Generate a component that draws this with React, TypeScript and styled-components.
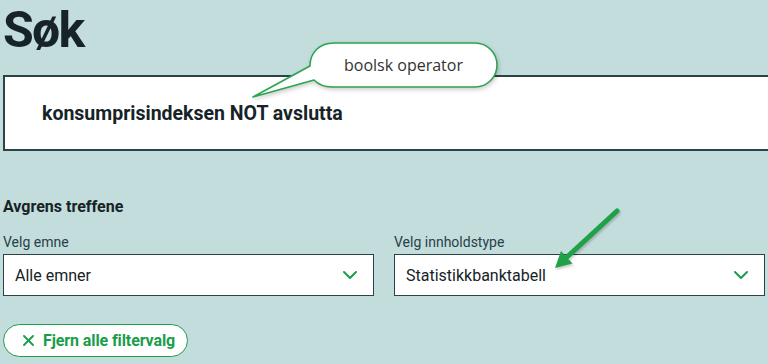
import React from "react";
import styled, { createGlobalStyle } from "styled-components";

const GlobalStyle = createGlobalStyle`
  html, body {
    margin: 0;
    padding: 0;
    background: #c3dcdc;
    font-family: Roboto, "Liberation Sans", Arial, sans-serif;
    color: #162327;
  }
`;

const Page = styled.div`
  position: relative;
  width: 768px;
  height: 364px;
  padding-left: 3px;
  box-sizing: border-box;
  overflow: hidden;
`;

const Title = styled.h1`
  margin: 0 0 15px;
  font-size: 50px;
  line-height: 60px;
  font-weight: 700;
  letter-spacing: -1.8px;
`;

const SearchBox = styled.div`
  display: flex;
  align-items: center;
  height: 76px;
  width: calc(100% + 20px);
  box-sizing: border-box;
  border: 2px solid #2b4347;
  background: #fff;
  padding-left: 37px;
  font-size: 19.5px;
  font-weight: 700;
`;

const FilterHeading = styled.h2`
  margin: 46px 0 0;
  font-size: 16px;
  line-height: 20px;
  font-weight: 700;
`;

const FilterGrid = styled.div`
  display: grid;
  grid-template-columns: 371px 371px;
  column-gap: 20px;
  margin-top: 16px;
`;

const Field = styled.div`
  display: flex;
  flex-direction: column;
  row-gap: 3px;
`;

const Label = styled.span`
  font-size: 14px;
  line-height: 18px;
  color: #274247;
`;

const Select = styled.div`
  display: flex;
  align-items: center;
  justify-content: space-between;
  height: 42px;
  box-sizing: border-box;
  border: 1px solid #2b4347;
  background: #fff;
  padding: 0 15px 0 11px;
  font-size: 16px;
`;

const ClearButton = styled.button`
  display: inline-flex;
  align-items: center;
  column-gap: 9px;
  margin-top: 28px;
  height: 33px;
  padding: 0 12px 0 19px;
  border: 1px solid #1a9d49;
  border-radius: 17px;
  background: #fff;
  color: #1a9d49;
  font-family: Roboto, "Liberation Sans", Arial, sans-serif;
  font-size: 16px;
  font-weight: 700;
  letter-spacing: -0.1px;
  cursor: pointer;
`;

const Callout = styled.div`
  position: absolute;
  left: 250px;
  top: 40px;
  width: 252px;
  height: 62px;

  svg {
    display: block;
    filter: drop-shadow(1px 2px 2px rgba(0, 0, 0, 0.2));
  }
`;

const CalloutText = styled.span`
  position: absolute;
  left: 60px;
  top: 3px;
  width: 187px;
  height: 44px;
  display: flex;
  align-items: center;
  justify-content: center;
  font-family: "Open Sans", "Liberation Sans", sans-serif;
  font-size: 16px;
  color: #333;
`;

const Arrow = styled.svg`
  position: absolute;
  left: 545px;
  top: 200px;
  filter: drop-shadow(1px 2px 1px rgba(0, 0, 0, 0.2));
`;

const Chevron = () => (
  <svg width="16" height="10" viewBox="0 0 16 10">
    <polyline
      points="2,2 8,8 14,2"
      fill="none"
      stroke="#1a9d49"
      strokeWidth="2"
      strokeLinecap="round"
      strokeLinejoin="round"
    />
  </svg>
);

const CloseIcon = () => (
  <svg width="11" height="11" viewBox="0 0 11 11">
    <path
      d="M1 1 L10 10 M10 1 L1 10"
      stroke="#1a9d49"
      strokeWidth="1.8"
      strokeLinecap="round"
    />
  </svg>
);

const App = () => {
  return (
    <Page>
      <GlobalStyle />
      <Title>Søk</Title>
      <SearchBox>konsumprisindeksen NOT avslutta</SearchBox>
      <FilterHeading>Avgrens treffene</FilterHeading>
      <FilterGrid>
        <Field>
          <Label>Velg emne</Label>
          <Select>
            Alle emner
            <Chevron />
          </Select>
        </Field>
        <Field>
          <Label>Velg innholdstype</Label>
          <Select>
            Statistikkbanktabell
            <Chevron />
          </Select>
        </Field>
      </FilterGrid>
      <ClearButton>
        <CloseIcon />
        Fjern alle filtervalg
      </ClearButton>

      <Callout>
        <svg width="252" height="62" viewBox="0 0 252 62">
          <path
            d="M60 26 C60 12 70 3 84 3 L225 3 A22 22 0 0 1 225 47 L82 47 C75 47 68 44 64 40 L3 57 Z"
            fill="#fff"
            stroke="#2ea44f"
            strokeWidth="1.6"
            strokeLinejoin="round"
          />
        </svg>
        <CalloutText>boolsk operator</CalloutText>
      </Callout>

      <Arrow width="80" height="75" viewBox="0 0 80 75">
        <line
          x1="72"
          y1="11"
          x2="22"
          y2="57"
          stroke="#20a148"
          strokeWidth="5"
          strokeLinecap="round"
        />
        <polygon points="10,68 27.5,63.5 16,51" fill="#20a148" />
      </Arrow>
    </Page>
  );
};

export default App;
